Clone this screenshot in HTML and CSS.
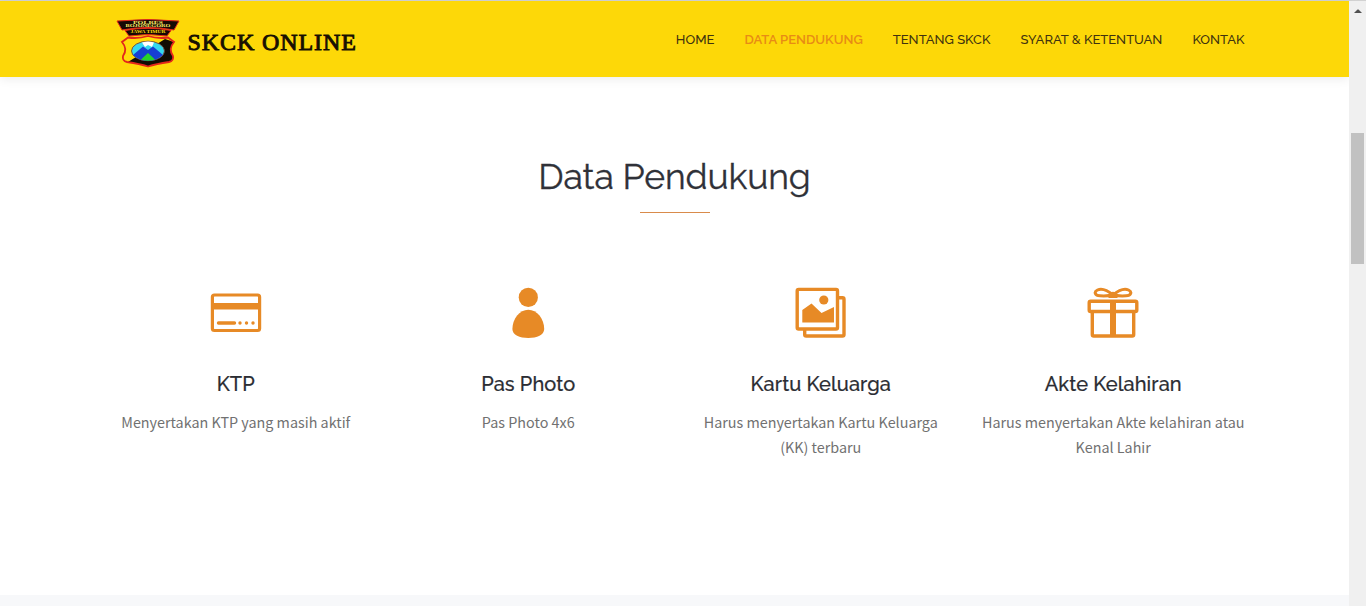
FILE: index.html
```html
<!DOCTYPE html>
<html lang="id">
<head>
<meta charset="utf-8">
<title>SKCK Online</title>
<link rel="stylesheet" href="styles.css">
</head>
<body>
<div class="window">
  <div class="page">
    <header class="header">
      <div class="container header-row">
        <a class="brand">
          <svg class="crest" viewBox="0 0 64 50" width="64" height="50">
            <path d="M1 2Q32-1 63 2L58 11Q32 6 6 11Z" fill="#160804" stroke="#e3271b" stroke-width="1"/>
            <path d="M9 11.500Q32 7 55 11.500L51 17Q32 14 13 17Z" fill="#160804" stroke="#e3271b" stroke-width="1"/>
            <text x="32" y="4.600" class="crest-small" textLength="30" lengthAdjust="spacingAndGlyphs">POLRES</text>
            <text x="32" y="8" class="crest-small" textLength="45" lengthAdjust="spacingAndGlyphs">BOJONEGORO</text>
            <text x="32" y="14.200" class="crest-text" textLength="35" lengthAdjust="spacingAndGlyphs">JAWA TIMUR</text>
            <path d="M12 18.500Q22 20 32 17Q42 20 52 18.500L58 23Q52 30 57 37Q58 42 53 43Q40 45 32 47.500Q24 45 11 43Q6 42 7 37Q12 30 6 23Z" fill="#ffdb08"/>
            <path d="M49 20L58 23Q52 30 57 37Q58 42 53 43Q40 45 32 47.500Q24 45 12 43Z" fill="#120c04"/>
            <path d="M12 18.500Q22 20 32 17Q42 20 52 18.500L58 23Q52 30 57 37Q58 42 53 43Q40 45 32 47.500Q24 45 11 43Q6 42 7 37Q12 30 6 23Z" fill="none" stroke="#e3271b" stroke-width="1.800"/>
            <ellipse cx="32" cy="32" rx="16.500" ry="9.800" fill="#35d8ee" stroke="#7a3020" stroke-width=".8"/>
            <path d="M26 23.500Q32 21.500 38 23.500L36 28L32 26L29 28Z" fill="#fff"/>
            <path d="M17 36L27 27.500L32 31L37 27.500L47 36Q40 42 32 41.800Q24 42 17 36Z" fill="#173fd2"/>
            <path d="M25 40.500L32 34L39 40.500Q32 43 25 40.500Z" fill="#27d32a"/>
          </svg>
          <span class="wordmark">SKCK ONLINE</span>
        </a>
        <nav class="nav">
          <a>HOME</a><a class="active">DATA PENDUKUNG</a><a>TENTANG SKCK</a><a>SYARAT &amp; KETENTUAN</a><a>KONTAK</a>
        </nav>
      </div>
    </header>
    <main class="section">
      <h1 class="title">Data Pendukung</h1>
      <div class="rule"></div>
      <div class="features">
        <article class="feature">
          <svg class="icon" viewBox="0 0 52 52">
            <rect x="2.400" y="8" width="47.200" height="35.500" rx="2" fill="none" stroke="currentColor" stroke-width="3.200"/>
            <path d="M2 16h48v6.500H2z" fill="currentColor"/>
            <path d="M8.500 36h16M30 36h.01M36.500 36h.01M43 36h.01" stroke="currentColor" stroke-width="3.400" stroke-linecap="round"/>
          </svg>
          <h2>KTP</h2>
          <p>Menyertakan KTP yang masih aktif</p>
        </article>
        <article class="feature">
          <svg class="icon" viewBox="0 0 52 52" fill="currentColor">
            <circle cx="26.300" cy="10.400" r="9.600"/>
            <path d="M26.300 22.800C35 22.800 42.200 32 42.200 42C42.200 48 35 51 26.300 51S10.400 48 10.400 42C10.400 32 17.600 22.800 26.300 22.800Z"/>
          </svg>
          <h2>Pas Photo</h2>
          <p>Pas Photo 4x6</p>
        </article>
        <article class="feature">
          <svg class="icon" viewBox="0 0 52 52" fill="none" stroke="currentColor" stroke-width="3.400" stroke-linejoin="round">
            <path d="M43 10.700h4.500q1.500 0 1.500 1.500V47.500q0 1.500-1.500 1.500H11.200q-1.500 0-1.500-1.500V42"/>
            <rect x="2.200" y="2.400" width="40.300" height="39.600" rx="1.500"/>
            <circle cx="28.800" cy="13" r="4.600" fill="currentColor" stroke="none"/>
            <path d="M7.300 23L16.500 16.400L26.500 26L39 20V35.500H7.300Z" fill="currentColor" stroke="none"/>
          </svg>
          <h2>Kartu Keluarga</h2>
          <p>Harus menyertakan Kartu Keluarga (KK) terbaru</p>
        </article>
        <article class="feature">
          <svg class="icon" viewBox="0 0 52 52" fill="none" stroke="currentColor" stroke-width="3.400" stroke-linejoin="round">
            <rect x="2.200" y="14.200" width="47.600" height="10.300" rx="1.500"/>
            <path d="M5.300 24.500V47.500q0 1.500 1.500 1.500H45.200q1.500 0 1.500-1.500V24.500"/>
            <path d="M23 13h6V49h-6z" fill="currentColor" stroke="none"/>
            <path d="M26 8C20 3 15 1 10.500 3C6.500 5 8 8.500 13 8.800C18 9 22 9 26 8ZM26 8C32 3 37 1 41.500 3C45.500 5 44 8.500 39 8.800C34 9 30 9 26 8Z" stroke-width="3"/>
            <path d="M21.500 7Q26 2.500 30.500 7V11H21.500Z" fill="currentColor" stroke="none"/>
          </svg>
          <h2>Akte Kelahiran</h2>
          <p>Harus menyertakan Akte kelahiran atau Kenal Lahir</p>
        </article>
      </div>
    </main>
    <div class="next-section"></div>
  </div>
  <aside class="scrollbar">
    <svg class="arrow" width="8" height="5" viewBox="0 0 8 5"><path d="M0 4L3.500 .5H4.500L8 4Z" fill="#505050"/></svg>
    <div class="thumb"></div>
  </aside>
</div>
</body>
</html>
```
FILE: styles.css
```css
* { box-sizing: border-box; }
body { margin: 0; overflow: hidden; background: #fff; font-family: "Noto Sans CJK SC", sans-serif; }
.window { display: flex; height: 606px; border-top: 1px solid #d2d2d2; }
.page { width: 1349px; display: flex; flex-direction: column; }
.header { height: 76px; flex: none; background: #fdd808; box-shadow: 0 2px 10px rgba(0, 0, 0, .08); }
.container { width: 1170px; margin: 0 auto; padding: 0 15px; }
.header-row { display: flex; justify-content: space-between; height: 76px; }
.brand { display: flex; align-items: flex-start; padding: 18px 0 0 11px; }
.crest { overflow: visible; flex: none; }
.crest-small { font: bold 3.4px "Liberation Serif", serif; fill: #fff06a; text-anchor: middle; }
.crest-text { font: bold 5px "Liberation Serif", serif; fill: #ffdb08; text-anchor: middle; }
.wordmark { margin: 8px 0 0 8px; font: 400 24px/30px "Liberation Serif", serif; letter-spacing: .9px; -webkit-text-stroke: .9px #170f02; color: #170f02; white-space: nowrap; }
.nav { display: flex; gap: 30px; padding-top: 29px; font: 500 13px/20px Raleway, Lato, sans-serif; letter-spacing: .005px; color: #40320f; white-space: nowrap; }
.nav .active { color: #e88b15; font-weight: 600; }
.section { height: 518px; flex: none; padding-top: 78px; text-align: center; }
.title { margin: 0; font: 400 35.5px/43px Raleway, Lato, sans-serif; -webkit-text-stroke: .3px #2f3138; letter-spacing: -.1px; color: #2f3138; }
.rule { width: 70px; height: 1px; margin: 14px auto 0; background: #d98b4b; }
.features { width: 1170px; display: flex; margin: 74px auto 0; }
.feature { width: 292.5px; padding: 0 15px; }
.icon { display: block; width: 52px; height: 52px; margin: 0 auto; color: #e78a26; }
.feature h2 { margin: 32px 0 0; font: 500 20px/26px Raleway, Lato, sans-serif; letter-spacing: .1px; -webkit-text-stroke: .2px #2b2d33; color: #2b2d33; }
.feature p { margin: 12px -1px 0; font-size: 14.35px; line-height: 25px; color: #717171; }
.next-section { flex: 1; background: #f7f8fa; }
.scrollbar { width: 17px; background: #f0f0f0; padding: 8px 2px 0; }
.arrow { display: block; margin: 0 auto; }
.thumb { width: 13px; height: 131px; margin-top: 119px; background: #c1c1c1; }
```
